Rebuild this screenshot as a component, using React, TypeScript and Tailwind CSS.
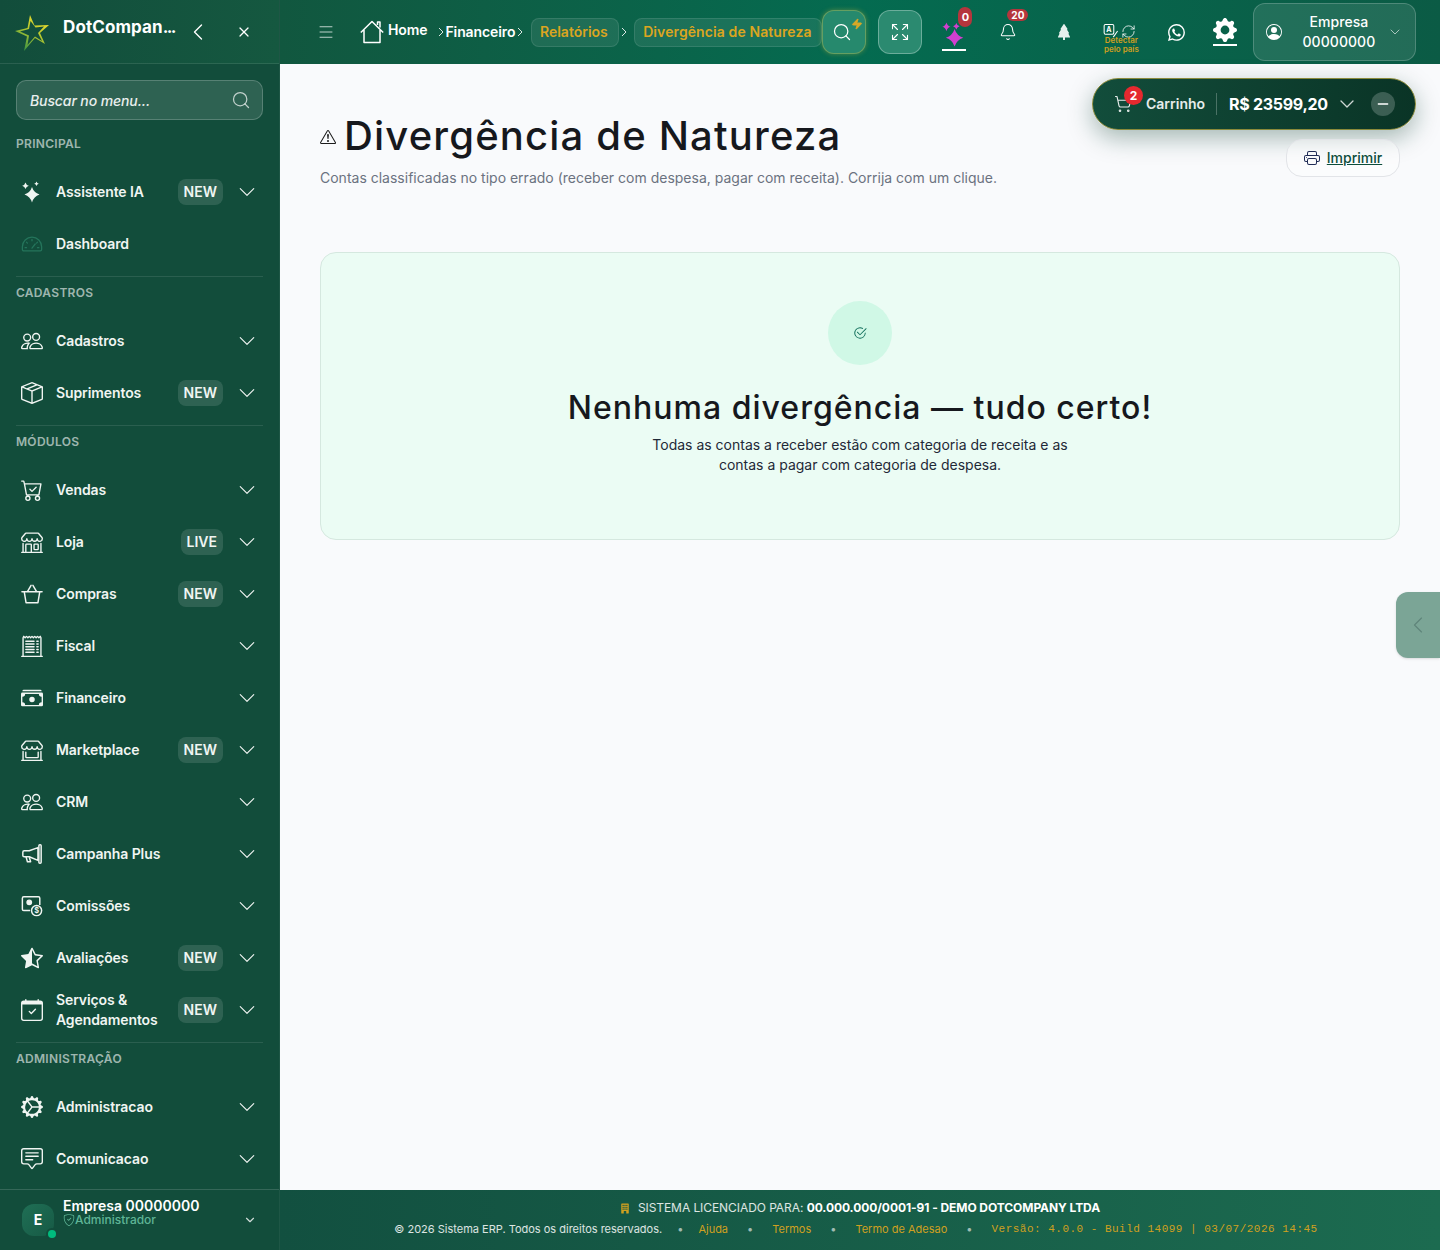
import type { ReactNode } from 'react'
import {
  BsBoxSeam,
  BsBuildingFill,
  BsCalendarCheck,
  BsCartCheck,
  BsCashStack,
  BsChatSquareText,
  BsCheck2Circle,
  BsChevronDown,
  BsExclamationTriangle,
  BsGearFill,
  BsGearWideConnected,
  BsPeople,
  BsPersonCircle,
  BsPrinter,
  BsReceiptCutoff,
  BsShieldCheck,
  BsShop,
  BsShopWindow,
  BsStarHalf,
  BsTreeFill,
  BsWhatsapp,
} from 'react-icons/bs'
import { Bell, ChevronDown, ChevronLeft, Expand, Menu, Minus, RefreshCw, Search, ShoppingCart, X, Zap } from 'lucide-react'

type NavItem = { icon: ReactNode; label: ReactNode; badge?: string; noArrow?: boolean }

const ic = 'h-[22px] w-[22px]'

function CommissionIcon() {
  return (
    <svg viewBox="0 0 24 24" className={ic} fill="none" stroke="currentColor" strokeWidth="1.6">
      <path d="M10 17H3a1.500 1.500 0 0 1-1.500-1.500v-12A1.500 1.500 0 0 1 3 2h16a1.500 1.500 0 0 1 1.500 1.500V11" />
      <circle cx="9" cy="8" r="2.400" fill="currentColor" />
      <circle cx="17" cy="17" r="5.500" />
      <text x="17" y="20" textAnchor="middle" fontSize="8" fill="currentColor" stroke="none" fontWeight="700">$</text>
    </svg>
  )
}

function SparkleCluster() {
  return (
    <svg viewBox="0 0 22 22" className={ic} fill="currentColor">
      <path d="M11 6Q12.800 11.700 18.500 13.500Q12.800 15.300 11 21.500Q9.200 15.300 3.500 13.500Q9.200 11.700 11 6z" />
      <path d="M4.500 1.500Q5.200 4.100 7.800 4.800Q5.200 5.500 4.500 8.100Q3.800 5.500 1.200 4.800Q3.800 4.100 4.500 1.500z" />
      <path d="M15.500 0.500Q16 2.400 17.800 2.800Q16 3.300 15.500 5.100Q15 3.300 13.200 2.800Q15 2.400 15.500 0.500z" />
    </svg>
  )
}

function GaugeIcon() {
  return (
    <svg viewBox="0 0 24 24" className={`${ic} text-[#24745b]`} fill="none" stroke="currentColor" strokeWidth="1.4" strokeLinecap="round">
      <path d="M1.500 15a10.500 10.500 0 0 1 21 0v3a1.500 1.500 0 0 1-1.500 1.500H3A1.500 1.500 0 0 1 1.500 18z" />
      <path d="M12 7v1.500M6 10l1 1M18 10l-1 1M4.500 16H6M18 16h1.500M12 16.500l3.500-4.500" />
    </svg>
  )
}

function BasketIcon() {
  return (
    <svg viewBox="0 0 24 24" className={ic} fill="none" stroke="currentColor" strokeWidth="1.6" strokeLinecap="round" strokeLinejoin="round">
      <path d="M1 9.500h22M3.500 9.500L5.500 21.500h13L20.500 9.500M7 9.500L11 2.500M17 9.500L13 2.500" />
    </svg>
  )
}

function MegaphoneIcon() {
  return (
    <svg viewBox="0 0 24 24" className={ic} fill="none" stroke="currentColor" strokeWidth="1.6" strokeLinejoin="round">
      <path d="M18.500 5L9 8.500H3.500A1.500 1.500 0 0 0 2 10v3.500A1.500 1.500 0 0 0 3.500 15H9l9.500 4z" />
      <path d="M5.500 15l1.500 5.500h3.500L9 15.500" />
      <rect x="19.500" y="2" width="2.500" height="20" rx="1" />
    </svg>
  )
}

const principal: NavItem[] = [
  { icon: <SparkleCluster />, label: 'Assistente IA', badge: 'NEW' },
  { icon: <GaugeIcon />, label: 'Dashboard', noArrow: true },
]
const cadastros: NavItem[] = [
  { icon: <BsPeople className={ic} />, label: 'Cadastros' },
  { icon: <BsBoxSeam className={ic} />, label: 'Suprimentos', badge: 'NEW' },
]
const modulos: NavItem[] = [
  { icon: <BsCartCheck className={ic} />, label: 'Vendas' },
  { icon: <BsShop className={ic} />, label: 'Loja', badge: 'LIVE' },
  { icon: <BasketIcon />, label: 'Compras', badge: 'NEW' },
  { icon: <BsReceiptCutoff className={ic} />, label: 'Fiscal' },
  { icon: <BsCashStack className={ic} />, label: 'Financeiro' },
  { icon: <BsShopWindow className={ic} />, label: 'Marketplace', badge: 'NEW' },
  { icon: <BsPeople className={ic} />, label: 'CRM' },
  { icon: <MegaphoneIcon />, label: 'Campanha Plus' },
  { icon: <CommissionIcon />, label: 'Comissões' },
  { icon: <BsStarHalf className={ic} />, label: 'Avaliações', badge: 'NEW' },
  {
    icon: <BsCalendarCheck className={ic} />,
    label: (
      <>
        Serviços &amp;
        <br />
        Agendamentos
      </>
    ),
    badge: 'NEW',
  },
]
const admin: NavItem[] = [
  { icon: <BsGearWideConnected className={ic} />, label: 'Administracao' },
  { icon: <BsChatSquareText className={ic} />, label: 'Comunicacao' },
]

function LogoStar() {
  return (
    <svg viewBox="0 0 40 40" className="h-10 w-10 shrink-0">
      <defs>
        <linearGradient id="star" x1="0.2" y1="1" x2="0.8" y2="0">
          <stop offset="0" stopColor="#2f8f45" />
          <stop offset="0.55" stopColor="#b9c92f" />
          <stop offset="1" stopColor="#f2dc2c" />
        </linearGradient>
      </defs>
      <path
        d="M18 3L22.500 13.500L37 13L28 21L33 32L23 26L12 39L15 24.500L3 19L15.500 16ZM18.500 9L17 17L8 19.500L17 23.500L15.500 33L23 24.500L30 29L26 21L32 14.500L23.500 15.500Z"
        fill="url(#star)"
        fillRule="evenodd"
      />
    </svg>
  )
}

function Section({ title, items, divider = true }: { title: string; items: NavItem[]; divider?: boolean }) {
  return (
    <div>
      {divider && <div className="mx-4 mt-1.5 h-px bg-white/10" />}
      <div className={`px-4 pt-[7px] pb-[13px] text-xs leading-[18px] font-semibold tracking-[0.3px] text-white/60 ${divider ? '' : 'mt-2'}`}>
        {title}
      </div>
      {items.map((item, i) => (
        <div key={i} className="flex h-[52px] items-center pr-[23px] pl-[21px] text-[#f0f5f2]">
          <span className="flex w-[35px] shrink-0 items-center">{item.icon}</span>
          <span className="flex-1 text-sm leading-5 font-semibold tracking-[-0.1px]">{item.label}</span>
          {item.badge && (
            <span className="mr-[15px] rounded-lg bg-white/12 px-1.5 text-sm leading-[26px] font-semibold">
              {item.badge}
            </span>
          )}
          {!item.noArrow && <BsChevronDown className="h-[18px] w-[18px]" />}
        </div>
      ))}
    </div>
  )
}

function Sidebar() {
  return (
    <aside className="flex h-[1250px] w-[280px] shrink-0 flex-col border-r border-white/5 bg-[#124d3b]">
      <div className="flex h-[64px] shrink-0 items-center border-b border-white/10 bg-gradient-to-r from-[#124d3b] to-[#155840] pl-3 text-white">
        <LogoStar />
        <span className="mb-2 ml-[11px] w-[111px] text-[17px] font-bold tracking-[0.1px] whitespace-nowrap">
          DotCompan<span className="tracking-[-1.6px]">...</span>
        </span>
        <ChevronLeft className="ml-[10px] h-7 w-7" strokeWidth={1.2} />
        <X className="ml-6 h-4 w-4" strokeWidth={1.8} />
      </div>
      <div className="mx-4 mt-4 flex h-10 shrink-0 items-center justify-between rounded-[10px] border border-white/20 bg-white/12 pr-[11px] pl-[13px]">
        <span className="pt-0.5 text-sm font-medium tracking-[-0.1px] text-white/90 italic">Buscar no menu...</span>
        <Search className="h-5 w-5 text-white/70" strokeWidth={1.5} />
      </div>
      <div className="flex-1 overflow-hidden">
        <Section title="PRINCIPAL" items={principal} divider={false} />
        <Section title="CADASTROS" items={cadastros} />
        <Section title="MÓDULOS" items={modulos} />
        <Section title="ADMINISTRAÇÃO" items={admin} />
      </div>
      <div className="flex h-[61px] shrink-0 items-center border-t border-white/15 px-[22px] text-white">
        <span className="relative flex h-8 w-8 shrink-0 items-center justify-center rounded-xl bg-gradient-to-br from-[#1f6f55] to-[#175a45] text-sm font-bold">
          E
          <span className="absolute -right-0.5 -bottom-0.5 h-2 w-2 rounded-full bg-emerald-500 ring-2 ring-[#124d3b]" />
        </span>
        <div className="ml-[9px] flex-1 pb-4">
          <div className="text-sm leading-4 font-semibold">Empresa 00000000</div>
          <div className="flex items-center text-xs leading-3 font-medium text-[#5fb596]">
            <BsShieldCheck className="h-3 w-3" />
            Administrador
          </div>
        </div>
        <ChevronDown className="h-[14px] w-[14px] text-white/80" />
      </div>
    </aside>
  )
}

function Sep({ className }: { className: string }) {
  return (
    <svg viewBox="0 0 6 10" className={`h-[10px] w-[6px] shrink-0 text-white/85 ${className}`} fill="none" stroke="currentColor" strokeWidth="1">
      <path d="M1 1l4 4-4 4" />
    </svg>
  )
}

function Chip({ children, className }: { children: ReactNode; className: string }) {
  return (
    <span className={`flex h-[29px] shrink-0 items-center justify-center rounded-lg border border-white/10 bg-white/8 text-sm font-semibold text-[#dba520] ${className}`}>
      {children}
    </span>
  )
}

function Header() {
  return (
    <header className="flex h-[64px] shrink-0 items-center bg-gradient-to-r from-[#11573f] via-[#046b50] to-[#0b5b45] pl-[37px] text-white">
      <Menu className="h-[18px] w-[18px] shrink-0 text-white/75" strokeWidth={1.3} />
      <svg viewBox="0 0 24 24" className="ml-[25px] h-6 w-6 shrink-0" fill="none" stroke="currentColor" strokeWidth="1.5" strokeLinejoin="round">
        <path d="M0.800 12.500L12 1.500l11.200 11M4 10v12.500h16V10M17.500 5V2h2.500v5.500" />
      </svg>
      <span className="mb-1 ml-1 text-sm font-semibold tracking-[-0.1px]">Home</span>
      <Sep className="ml-[11px]" />
      <span className="ml-px text-sm font-semibold tracking-[-0.1px]">Financeiro</span>
      <Sep className="ml-0.5" />
      <Chip className="ml-2 w-[88px] pr-[3px]">Relatórios</Chip>
      <Sep className="ml-0.5" />
      <Chip className="ml-[7px] w-[188px] pr-0.5 tracking-[0.1px]">Divergência de Natureza</Chip>

      <span className="relative flex h-[44px] w-[44px] shrink-0 items-center justify-center rounded-xl border border-[#8fae5a]/60 bg-[#26896d] shadow-[0_0_5px_rgba(200,180,60,0.4)]">
        <Search className="-ml-1 h-5 w-5" strokeWidth={1.5} />
        <Zap className="absolute top-[7px] right-[2px] h-3 w-3 fill-[#d8a826] text-[#d8a826]" />
      </span>
      <span className="ml-3 flex h-[44px] w-[44px] shrink-0 items-center justify-center rounded-xl border border-white/30 bg-[#2b8a70]">
        <Expand className="h-5 w-5" strokeWidth={1.3} />
      </span>

      <span className="relative ml-5 flex h-[44px] w-6 shrink-0 flex-col items-center justify-end">
        <svg viewBox="0 0 24 24" className="h-[28px] w-[28px] shrink-0" fill="#d33fd0">
          <path d="M12.500 8.500Q14.300 14.200 20 16Q14.300 17.800 12.500 23.500Q10.700 17.800 5 16Q10.700 14.200 12.500 8.500z" />
          <path d="M5.500 3Q6.300 6 9 6.700Q6.300 7.400 5.500 10.400Q4.700 7.400 2 6.700Q4.700 6 5.500 3z" />
          <path d="M14 3.500Q14.600 5.800 16.800 6.300Q14.600 6.900 14 9.100Q13.400 6.900 11.200 6.300Q13.400 5.800 14 3.500z" />
        </svg>
        <span className="mt-0.5 mb-[3px] h-0.5 w-6 bg-white" />
        <span className="absolute -top-[3px] right-[-6px] flex h-[20px] w-[14px] items-center justify-center rounded-full bg-[#b5353d] text-[11px] font-bold">0</span>
      </span>

      <span className="relative ml-[30px] flex w-6 shrink-0 justify-center">
        <Bell className="h-[18px] w-[18px]" strokeWidth={1.4} />
        <span className="absolute -top-[14px] -right-[8px] rounded-full bg-[#b5353d] px-1 text-[10px] leading-3 font-bold">20</span>
      </span>

      <BsTreeFill className="ml-9 h-4 w-4 shrink-0 text-white/90" />

      <span className="relative ml-[31px] flex h-[32px] w-[36px] shrink-0 items-start pt-2">
        <svg viewBox="0 0 18 16" className="h-[14px] w-[17px] shrink-0" fill="none" stroke="currentColor" strokeWidth="1.2">
          <rect x="0.600" y="0.600" width="11" height="11" rx="1.500" />
          <text x="6" y="9" textAnchor="middle" fontSize="8" fontWeight="700" fill="currentColor" stroke="none">A</text>
          <path d="M11 15l5-7" />
        </svg>
        <RefreshCw className="ml-[1px] h-[15px] w-[15px] shrink-0" strokeWidth={1.3} />
        <span className="absolute top-5 left-[-1px] w-[38px] text-center text-[8px] leading-[9px] font-semibold text-[#d0a020]">
          Detectar
          <br />
          pelo país
        </span>
      </span>

      <BsWhatsapp className="ml-[29px] h-[17px] w-[17px] shrink-0" />

      <span className="ml-7 flex shrink-0 flex-col items-center">
        <BsGearFill className="h-6 w-6" />
        <span className="mt-0.5 h-0.5 w-6 bg-white" />
      </span>

      <div className="ml-4 flex h-[58px] w-[163px] shrink-0 items-center rounded-xl border border-white/20 bg-white/10 px-3">
        <BsPersonCircle className="h-4 w-4 shrink-0" />
        <div className="flex-1 pl-2 text-center text-sm leading-5 font-medium tracking-[0.05px]">
          Empresa
          <br />
          00000000
        </div>
        <ChevronDown className="h-4 w-4 shrink-0 text-white/70" strokeWidth={1.3} />
      </div>
    </header>
  )
}

function Content() {
  return (
    <main className="relative flex-1 bg-[#f9fafc] px-10">
      <div className="absolute top-[14px] right-6 flex h-[52px] w-[324px] items-center rounded-full border border-[#8a8a3a] bg-gradient-to-r from-[#124d3b] to-[#0a3426] pr-[20px] pl-[21px] text-white shadow-[0_8px_24px_rgba(10,60,45,0.35)]">
        <span className="relative">
          <ShoppingCart className="h-[18px] w-[18px] text-white/90" strokeWidth={1.5} />
          <span className="absolute -top-[9px] left-[10px] flex h-[19px] w-[19px] items-center justify-center rounded-full bg-[#e5292f] text-[12px] font-bold">2</span>
        </span>
        <span className="ml-[14px] text-sm font-semibold text-white/90">Carrinho</span>
        <span className="mr-3 ml-[11px] h-[22px] w-px bg-white/25" />
        <span className="text-base font-bold tracking-[-0.3px]">R$ 23599,20</span>
        <ChevronDown className="ml-[7px] h-6 w-6 text-white/80" strokeWidth={1.3} />
        <span className="ml-auto flex h-6 w-6 items-center justify-center rounded-full bg-white/20">
          <Minus className="h-4 w-4" />
        </span>
      </div>

      <div className="absolute top-[75px] right-10 flex h-[38px] w-[114px] items-center justify-center gap-[7px] rounded-2xl border border-[#e2e4e8] bg-white/40 text-sm font-medium text-[#0d4d3b]">
        <BsPrinter className="h-4 w-4 text-[#1f2b55]" />
        <span className="underline">Imprimir</span>
      </div>

      <div className="absolute top-[528px] right-0 flex h-[66px] w-[44px] items-center rounded-l-xl bg-[#7ba596] pl-2 text-[#5f857a] shadow-sm">
        <ChevronLeft className="h-7 w-7" strokeWidth={1} />
      </div>

      <div className="flex h-[188px] flex-col pt-[44px]">
        <div className="flex items-center">
          <BsExclamationTriangle className="mt-0.5 h-4 w-4 text-[#1b1b1b]" />
          <h1 className="ml-2 text-[40px] leading-[56px] font-medium tracking-[1.17px] text-[#16181d]">Divergência de Natureza</h1>
        </div>
        <p className="mt-1 text-sm leading-5 text-[#6b7280]">
          Contas classificadas no tipo errado (receber com despesa, pagar com receita). Corrija com um clique.
        </p>
      </div>

      <div className="flex h-[288px] flex-col items-center rounded-2xl border border-[#d5e8df] bg-[#ebfcf4] pt-12">
        <span className="flex h-16 w-16 items-center justify-center rounded-full bg-[#d0f8e6]">
          <BsCheck2Circle className="h-[14px] w-[14px] text-[#0d6b58]" />
        </span>
        <h2 className="mt-[19px] text-[32px] leading-[48px] font-medium tracking-[1px] text-[#16181d]">Nenhuma divergência — tudo certo!</h2>
        <p className="mt-[3px] w-[448px] text-center text-sm leading-5 text-[#1f2937]">
          Todas as contas a receber estão com categoria de receita e as contas a pagar com categoria de despesa.
        </p>
      </div>
    </main>
  )
}

function Footer() {
  return (
    <footer className="flex h-[60px] shrink-0 flex-col items-center bg-gradient-to-r from-[#125040] to-[#1c6b50] pt-2 text-white">
      <div className="flex items-center text-xs leading-5 tracking-[-0.07px] text-white/85">
        <BsBuildingFill className="mr-2 h-[13px] w-[10px] text-[#d0a020]" />
        SISTEMA LICENCIADO PARA:&nbsp;<b className="font-bold text-white">00.000.000/0001-91 - DEMO DOTCOMPANY LTDA</b>
      </div>
      <div className="mt-px flex items-center pr-2 text-[11px] leading-5 text-white/85">
        <span>© 2026 Sistema ERP. Todos os direitos reservados.</span>
        <span className="mx-[15px] text-white/60">•</span>
        <span className="text-[#d0a020]">Ajuda</span>
        <span className="mx-[19px] text-white/60">•</span>
        <span className="text-[#d0a020]">Termos</span>
        <span className="mx-[19px] text-white/60">•</span>
        <span className="text-[#d0a020]">Termo de Adesao</span>
        <span className="mx-[19px] text-white/60">•</span>
        <span className="[font-family:'Liberation_Mono',monospace] tracking-[0.49px] text-[#d0a020]">Versão: 4.0.0 - Build 14099 | 03/07/2026 14:45</span>
      </div>
    </footer>
  )
}

export default function App() {
  return (
    <div className="flex h-[1250px] w-[1440px] overflow-hidden [font-family:Inter,sans-serif]">
      <Sidebar />
      <div className="flex min-w-0 flex-1 flex-col">
        <Header />
        <Content />
        <Footer />
      </div>
    </div>
  )
}
